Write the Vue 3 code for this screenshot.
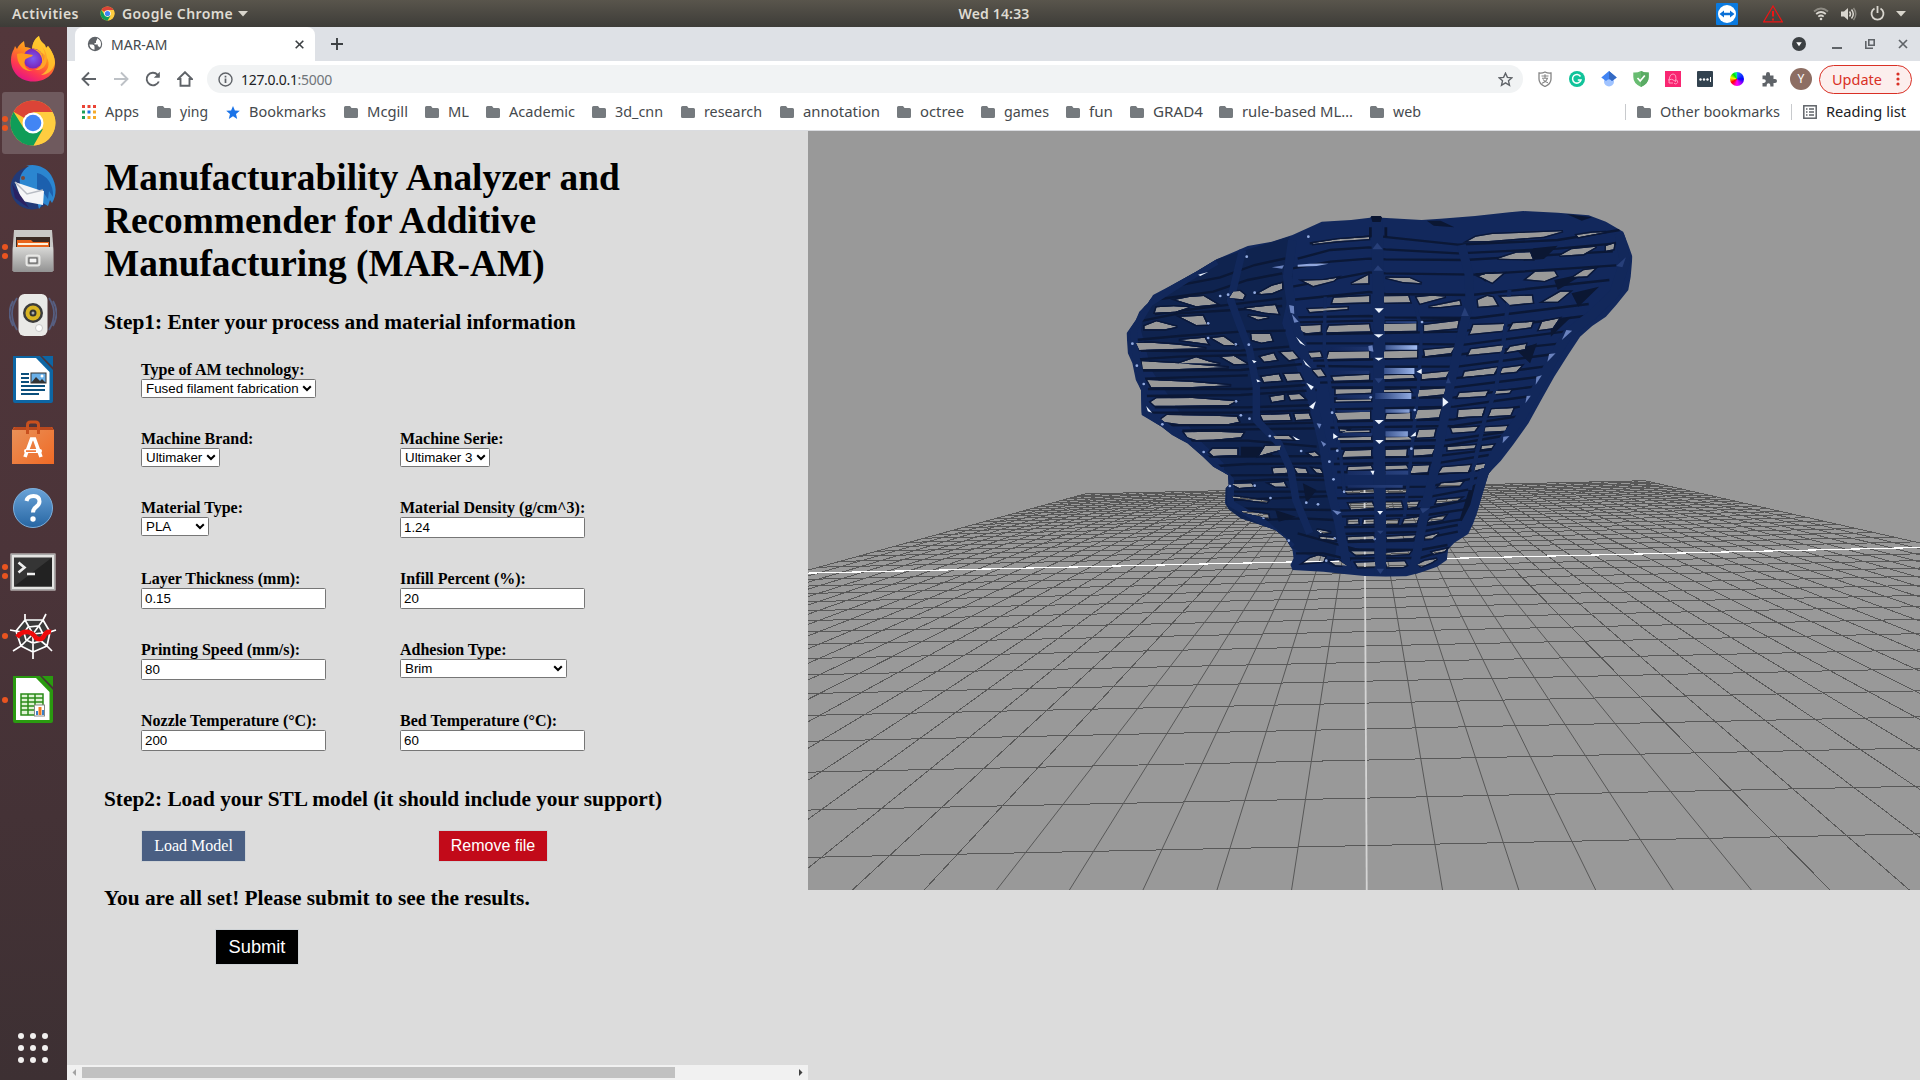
<script setup>
const bookmarks = [
  { t: 'Apps', k: 'apps', w: 75, s: 34 }, { t: 'ying', k: 'f', w: 69, s: 28 }, { t: 'Bookmarks', k: 'star', w: 118, s: 77 },
  { t: 'Mcgill', k: 'f', w: 81, s: 41 }, { t: 'ML', k: 'f', w: 61, s: 21 }, { t: 'Academic', k: 'f', w: 106, s: 66 },
  { t: '3d_cnn', k: 'f', w: 89, s: 48 }, { t: 'research', k: 'f', w: 99, s: 58 }, { t: 'annotation', k: 'f', w: 117, s: 77 },
  { t: 'octree', k: 'f', w: 84, s: 44 }, { t: 'games', k: 'f', w: 85, s: 45 }, { t: 'fun', k: 'f', w: 64, s: 24 },
  { t: 'GRAD4', k: 'f', w: 89, s: 50 }, { t: 'rule-based ML…', k: 'f', w: 151, s: 111 }, { t: 'web', k: 'f', w: 60, s: 28 }
]
const rows = [
  [{ l: 'Type of AM technology:', v: 'Fused filament fabrication', sel: true, w: 175 }],
  [{ l: 'Machine Brand:', v: 'Ultimaker', sel: true, w: 79 }, { l: 'Machine Serie:', v: 'Ultimaker 3', sel: true, w: 90 }],
  [{ l: 'Material Type:', v: 'PLA', sel: true, w: 68 }, { l: 'Material Density (g/cm^3):', v: '1.24', w: 185 }],
  [{ l: 'Layer Thickness (mm):', v: '0.15', w: 185 }, { l: 'Infill Percent (%):', v: '20', w: 185 }],
  [{ l: 'Printing Speed (mm/s):', v: '80', w: 185 }, { l: 'Adhesion Type:', v: 'Brim', sel: true, w: 167 }],
  [{ l: 'Nozzle Temperature (°C):', v: '200', w: 185 }, { l: 'Bed Temperature (°C):', v: '60', w: 185 }]
]
const dock = [
  { k: 'firefox', d: 0 }, { k: 'chrome', d: 2, on: true }, { k: 'bird', d: 0 }, { k: 'files', d: 2 }, { k: 'music', d: 0 },
  { k: 'writer', d: 0 }, { k: 'soft', d: 0 }, { k: 'help', d: 0 }, { k: 'term', d: 2 }, { k: 'spyder', d: 1 }, { k: 'calc', d: 1 }
]

// Perspective projection of the 50 x 50 build-plate grid into the viewport (origin 808,130)
const project = (u, n) => {
  const w = 1 - 0.00015 * u - 0.04161 * n
  return [(1364.9 + 22.64 * u - 56.76 * n) / w - 808, (560.3 - 0.61 * u - 17.356 * n) / w - 130]
}
const seg = (a, b) => ({ x1: a[0].toFixed(1), y1: a[1].toFixed(1), x2: b[0].toFixed(1), y2: b[1].toFixed(1) })
const cross = []
const along = []
for (let n = -25; n <= 17; n++) if (n !== 0) cross.push(seg(project(-25, n), project(25, n)))
for (let u = -25; u <= 25; u++) if (u !== 0) along.push({ ...seg(project(u, -25), project(u, 18)), soft: Math.abs(u) <= 5 })
const axisA = seg(project(-25, 0), project(25, 0))
const axisB = seg(project(0, -25), project(0, 18))

const outline = '615,95 700,90 755,83 760,78 786,78 790,83 905,90 960,86 1060,78 1160,67 1200,63 1300,68 1390,76 1440,95 1490,125 1505,165 1517,200 1512,260 1505,300 1470,345 1440,380 1400,408 1365,440 1330,495 1290,560 1255,625 1215,700 1170,765 1135,812 1100,850 1085,900 1068,960 1055,1000 1040,1032 1000,1058 982,1078 978,1110 950,1130 900,1148 860,1159 800,1160 740,1158 680,1152 620,1145 530,1140 524,1125 533,1105 530,1080 510,1045 480,1020 430,1002 380,985 345,958 334,940 336,895 345,885 343,855 300,830 270,800 225,760 180,735 150,710 92,675 90,600 75,570 65,520 52,490 48,430 75,390 85,365 110,340 125,315 180,285 250,245 310,208 400,168 470,155 530,135'
const holes = `590,159 660,148 752,141 752,147 660,154 590,162
650,323 753,318 753,337 645,340|795,319 866,318 872,337 795,338|890,322 935,317 975,320 900,341|925,351 1015,332 1018,344 960,351|575,357 690,352 690,357 580,366
552,408 612,405 612,425 570,430 556,424|636,407 752,403 756,424 628,427|795,402 890,400 890,422 795,424|912,405 1012,392 1008,415 912,424
575,488 610,486 615,500 585,503|636,486 752,484 752,505 630,507|795,484 892,482 892,503 795,505|912,480 1000,472 990,489 915,499
588,540 612,538 625,558 605,560|645,560 752,554 752,569 650,572|795,556 880,554 885,564 795,568|905,552 985,544 975,562 905,568
655,598 760,597 758,608 655,612|655,629 758,628 758,633 655,635|795,600 870,598 875,606 795,607|897,600 975,595 970,613 893,621
652,668 755,665 755,688 662,690|803,672 872,669 872,687 800,688|893,660 962,657 955,682 885,687
662,743 758,740 758,750 662,750|672,723 754,721 754,726 676,728|800,742 868,741 878,749 800,751|897,720 945,718 940,740 890,743|668,718 690,719 680,725 668,724
682,783 758,780 758,799 675,801|800,780 862,778 860,799 800,799|882,778 942,776 935,793 882,797
692,831 758,828 762,838 690,841|800,828 860,826 866,836 800,839|880,828 927,826 922,847 872,850
680,902 765,898 768,908 690,911|800,899 862,898 860,908 800,909
692,940 760,936 768,953 700,959|800,936 845,935 850,953 800,956|862,936 897,934 890,950 865,954
690,989 720,988 722,1001 690,1003|737,989 766,988 766,1001 735,1002|802,990 838,988 835,1002 800,1003|855,988 897,981 890,1000 850,1002
690,1042 765,1038 770,1048 690,1050|802,1040 888,1036 880,1045 805,1048|700,1084 768,1084 768,1092 715,1096|800,1088 874,1083 868,1092 800,1096
712,1118 770,1116 772,1130 720,1132|800,1116 855,1114 862,1126 852,1131 805,1132|890,1125 915,1112 950,1106 935,1117 905,1130|935,1086 978,1076 972,1084 940,1092
580,1105 605,1096 625,1101 620,1115 560,1120|635,1112 665,1111 690,1128 655,1126|600,1018 642,1027 620,1031|610,1040 650,1043 654,1051 610,1046
354,918 460,932 455,938 358,925|380,961 460,973 462,986 385,968|352,882 410,880 418,890 375,894|462,880 505,876 512,890 480,890
75,459 120,458 200,464 280,475 180,477 85,480|92,514 200,520 345,532 200,537 95,537|108,570 230,575 352,586 240,591 120,592
135,625 240,624 365,634 345,645 200,647 130,647 118,636|165,675 300,677 368,680 375,695 345,702 200,702 158,696 148,688
215,727 300,725 388,728 380,742 300,749 250,750 225,742|298,776 370,776 370,795 300,798 288,787
135,352 185,349 230,352 190,365 130,368|190,329 230,321 272,318 312,343 250,349|100,408 135,394 195,410 160,418 100,418|203,380 270,377 282,404 250,405
345,325 358,304 378,303 392,315 386,328|430,310 470,287 500,279 500,297 470,310 440,312|390,355 480,345 490,372 450,368|400,376 462,382 430,389
410,432 465,432 472,452 440,458 412,450|295,444 330,440 365,465 330,465|200,450 275,443 285,462|322,500 360,498 398,521 360,523
200,520 250,502 290,515 320,522|436,500 475,490 485,510 448,515|495,487 530,484 547,505 520,511
440,560 490,553 498,572 447,576|505,552 550,550 560,570 515,573|465,620 505,614 505,630 470,636|518,614 550,612 567,628 525,630
437,675 520,672 525,690 445,692|535,672 577,670 584,688 540,690|473,738 520,738 532,749 480,748|450,768 497,766 494,780 432,798
472,835 512,832 516,848 475,851|535,833 568,836 574,850 545,850|575,790 595,786 608,798 590,800|588,834 610,837 618,850 600,848
1038,154 1062,140 1110,132 1315,124 1260,140 1100,153|1125,206 1180,188 1220,187 1228,208|1305,197 1340,178 1412,170 1375,193
1070,258 1090,252 1142,250 1110,278|1208,268 1235,245 1290,244 1298,258 1262,273|1345,261 1375,241 1408,236 1385,259|1355,135 1400,128 1440,126 1360,142
1068,330 1095,318 1112,322 1125,346 1070,350|1135,320 1225,317 1228,338 1160,345|1258,335 1308,305 1335,305 1300,335|1440,168 1465,160 1462,178 1440,182
1055,405 1145,402 1140,422 1045,432|1170,400 1228,395 1222,412 1160,420|1255,395 1305,385 1285,415 1245,420
1048,478 1142,466 1137,485 1040,495|1162,470 1208,462 1205,478 1150,487|1030,545 1125,532 1115,552 1025,561|1140,535 1195,527 1180,545 1133,550
1015,609 1097,603 1090,618 1008,623|1012,660 1087,655 1080,678 1010,682|1108,658 1172,654 1163,675 1100,679|1120,603 1165,600 1160,608 1118,612
990,715 1068,710 1058,724 995,728|1090,712 1154,708 1148,722 1087,725|980,771 1062,765 1058,775 980,781|1080,768 1115,764 1108,774 1078,778
966,832 1047,825 1040,846 955,849|1062,825 1090,821 1086,834 1057,843|962,880 1025,875 1015,888 953,891
950,930 1020,923 1010,932 946,941|930,986 975,976 965,990 922,996|915,1040 955,1030 935,1046 915,1048
560,272 620,270 660,263 650,272 590,288|700,281 750,255 750,280|800,263 870,264 905,280 850,276`
  .split(/[|\n]/).map(s => s.trim())
const shape = [outline, ...holes].map(p => 'M' + p + 'Z').join(' ')
const holePath = holes.map(p => 'M' + p + 'Z').join(' ')

// Shadowed gaps under each horizontal strut
const gaps = `580,160 752,139 790,140 1010,164 1300,150 1480,120
545,206 640,180 752,172 800,178 1010,190 1300,176 1470,160
530,235 640,215 752,206 800,208 1030,210 1460,184|530,290 752,247 800,250 1060,254 1470,226
525,330 752,306 800,312 1050,315 1450,270|540,382 752,378 800,382 1060,384 1390,342|545,397 752,392 800,394 1020,390
560,433 752,430 1010,425 1380,378|570,460 752,460 1030,464 1340,422|590,512 752,509 1000,495 1310,460
600,528 752,530 1010,530 1290,492|610,578 752,574 1000,565 1260,530|640,592 752,592 1000,592 1250,560
650,625 1000,622 1230,590|640,658 752,656 1000,650 1210,620|650,695 1000,688 1190,650|640,713 1000,708 1180,680
660,756 980,750 1160,724|640,777 970,768 1140,738|660,806 960,797 1110,778|650,822 960,818 1100,795|660,846 950,852 1085,838
660,893 920,890 1075,862|650,925 930,920 1060,895|660,962 920,955 1060,925|650,980 920,975 1050,955|660,1012 900,1008 1040,985
670,1032 900,1026 1010,1005|690,1056 880,1052 1010,1025|690,1078 900,1080 980,1065|690,1105 900,1104 960,1085
180,290 320,262 420,225 510,205|125,330 300,305 400,270 500,250|130,372 300,350 500,325|80,395 200,370 360,360 500,348
75,450 200,438 380,425 510,422|90,482 200,483 380,482 520,470|80,508 200,500 400,495|95,542 380,540 560,522
100,566 400,556|110,597 400,597 570,585|95,618 380,615 600,600|130,652 400,652 600,645|110,668 370,668 600,660|165,706 390,704 600,698
210,722 400,718 600,715|235,752 400,752 600,770|280,800 380,800 620,798|310,828 400,822 630,820|350,856 500,855 640,858
350,875 480,868 640,870|340,905 460,905 640,905|345,930 480,925 640,918|380,955 480,958 650,960|430,990 560,985 650,990
545,1030 650,1060 720,1080|540,1090 620,1090 700,1110`.split(/[|\n]/).map(s => s.trim())

const ribs = [
  { p: '775,85 778,250 782,450 780,650 782,850 785,1000 785,1155', w: 34 },
  { p: '1020,165 1042,250 1045,330 1010,480 985,600 965,720 945,830 920,930 900,1040 880,1150', w: 26 },
  { p: '530,150 515,260 530,370 565,490 590,640 620,770 640,900 665,1000 690,1140', w: 26 },
  { p: '385,180 350,330 375,400 405,480 425,590 425,690 490,760 525,840 540,930 580,1030', w: 22 },
  { p: '1480,130 1495,215 1465,310 1400,375 1330,430 1290,500 1245,585 1195,680 1145,750 1085,850 1060,950 1025,1020', w: 30 },
  { p: '310,215 220,270 115,340 68,420 75,500 95,580 100,665 200,735 290,815 350,870 350,940 450,1000 530,1070', w: 20 },
  { p: '1160,300 1140,480 1120,600 1090,680 1065,790 1045,900', w: 12 },
  { p: '625,320 622,480 640,600 655,700 670,800 680,900', w: 10 },
  { p: '880,320 905,420 895,600 880,740 868,860 855,980', w: 10 }
]
const bright = '768,355 795,355 781,369|766,433 794,433 780,443|768,503 794,503 780,512|768,690 795,690 781,703|770,750 795,750 782,762|776,963 793,963 784,974|966,622 983,637 966,650|890,545 905,536 905,552|872,740 888,725 888,738|570,578 592,590 584,600|578,650 598,634 590,658|540,440 568,468 552,460|560,508 584,535 568,524|648,730 662,740 648,747|600,1020 632,1025 612,1030|105,648 122,668 110,664|530,738 552,750 540,750|412,510 426,514 418,520|425,568 438,574 428,577|256,254 285,246 262,258|756,842 768,842 764,856'
const mid = '1270,515 1275,492 1294,490|1236,584 1238,560 1254,556|1206,640 1210,618 1222,617|1312,450 1325,420 1342,422|520,345 534,348 535,372 524,368|528,372 548,395 535,398|645,960 672,966 660,975|1140,760 1142,740 1160,738|600,700 614,702 608,716|612,752 628,762 620,770|470,232 505,226 500,236|750,468 762,466 765,485 752,482'
const faint = '762,178 776,158 792,178|765,242 778,226 793,242|1020,378 1030,352 1042,378|768,565 794,565 780,580|900,955 928,955 908,970|975,580 982,562 990,580|775,1022 795,1022 785,1032|774,1136 796,1136 785,1152|1470,228 1498,202 1488,232'
const specks = [[397, 200], [320, 318], [343, 314], [420, 308], [285, 400], [285, 444], [365, 463], [403, 464], [65, 461], [78, 527], [98, 582], [152, 703], [366, 634], [405, 686], [380, 676], [464, 738], [272, 786], [348, 888], [420, 887], [466, 924], [446, 983], [519, 1052], [604, 943], [645, 668], [885, 660], [637, 815], [649, 868], [628, 1112], [906, 396], [652, 1045], [768, 1047], [555, 783], [570, 938], [757, 622], [660, 782], [875, 776], [576, 140], [680, 905]]
</script>

<template>
  <div class="desktop">
    <header class="top">
      <span class="act">Activities</span>
      <svg class="tchrome" width="15" height="15" viewBox="0 0 48 48"><use href="#chrome-logo" /></svg>
      <span class="appname">Google Chrome</span>
      <svg width="10" height="6" viewBox="0 0 10 6"><path d="M0 0h10L5 5.500z" fill="#d8d5cc" /></svg>
      <span class="clock">Wed 14:33</span>
      <div class="tray">
        <svg width="22" height="22" viewBox="0 0 22 22"><rect width="22" height="22" rx="1" fill="#0a7ae0" /><circle cx="11" cy="11" r="9" fill="#fff" /><path d="M3.500 11l4.500-3.500v2.300h6V7.500l4.500 3.500-4.500 3.500v-2.300H8v2.300z" fill="#0a6fd6" /></svg>
        <svg width="20" height="18" viewBox="0 0 20 18"><path d="M10 1L19.300 16.800H.7z" fill="none" stroke="#f01414" stroke-width="1.200" /><path d="M10 6v5.500M10 13.500v2" stroke="#f01414" stroke-width="2" /></svg>
        <svg width="16" height="14" viewBox="0 0 16 14" fill="none" stroke="#d9d6cf" stroke-width="1.800"><path d="M1 4.500Q8-1.500 15 4.500" opacity=".45" /><path d="M3.200 7Q8 3 12.800 7M5.300 9.600Q8 7.400 10.700 9.600" /><circle cx="8" cy="12" r="1.300" fill="#d9d6cf" stroke="none" /></svg>
        <svg width="16" height="14" viewBox="0 0 16 14"><path d="M0 4.500h3L7 1v12L3 9.500H0z" fill="#d9d6cf" /><path d="M8.500 4.500q2 2.500 0 5M10.500 2.500q3.600 4.500 0 9" fill="none" stroke="#d9d6cf" stroke-width="1.500" /><path d="M12.500 1q4.500 6 0 12" fill="none" stroke="#d9d6cf" stroke-width="1.500" opacity=".45" /></svg>
        <svg width="15" height="15" viewBox="0 0 15 15" fill="none" stroke="#d9d6cf" stroke-width="1.800"><path d="M4.500 2.500a6 6 0 1 0 6 0M7.500 0v7" /></svg>
        <svg width="10" height="6" viewBox="0 0 10 6"><path d="M0 0h10L5 5.500z" fill="#d8d5cc" /></svg>
      </div>
    </header>

    <div class="body">
      <nav class="dock">
        <div v-for="i in dock" :key="i.k" class="slot">
          <div class="tile" :class="{ on: i.on }">
            <span class="dots"><i v-for="d in i.d" :key="d"></i></span>
            <svg width="48" height="48" viewBox="0 0 48 48">
              <defs v-if="i.k === 'firefox'">
                <linearGradient id="ffg" x1=".8" y1="0" x2=".3" y2="1"><stop offset="0" stop-color="#ffe536" /><stop offset=".45" stop-color="#ff8a1c" /><stop offset=".75" stop-color="#ff3a4f" /><stop offset="1" stop-color="#e3128a" /></linearGradient>
                <radialGradient id="ffp"><stop offset="0" stop-color="#7c5cf5" /><stop offset="1" stop-color="#7a25b8" /></radialGradient>
                <linearGradient id="orange" x1="0" y1="0" x2="1" y2="1"><stop offset="0" stop-color="#e8925a" /><stop offset="1" stop-color="#f06a25" /></linearGradient>
                <linearGradient id="blu" x1="0" y1="0" x2="0" y2="1"><stop offset="0" stop-color="#6aa3d8" /><stop offset="1" stop-color="#2766a3" /></linearGradient>
                <linearGradient id="met" x1="0" y1="0" x2="0" y2="1"><stop offset="0" stop-color="#d8d8d6" /><stop offset="1" stop-color="#929292" /></linearGradient>
                <g id="chrome-logo">
                  <circle cx="24" cy="24" r="22.500" fill="#fcc934" />
                  <path d="M24 24L4.500 12.800A22.500 22.500 0 0 1 43.500 13z" fill="#db4437" /><path d="M24 13h19.500a22.500 22.500 0 0 1-19 33.500L34 30z" fill="#ffcd40" />
                  <path d="M4.500 12.800A22.500 22.500 0 0 0 24.500 46.500L34 30 24 34 14 28z" fill="#0f9d58" /><circle cx="24" cy="24" r="10.500" fill="#fff" /><circle cx="24" cy="24" r="8.300" fill="#4285f4" />
                </g>
              </defs>
              <template v-if="i.k === 'firefox'">
                <path d="M24 46.500C11 46.500 2 37 2 25c0-4 1-8 3-11l1-3 2 3c1-3 4-6 7-8l1 6c3 0 6 1 7 3 0-5 2-11 7-14 1 5 3 6 6 9l1 3 2-2c3 4 7 10 7 17 0 11-9 18.500-22 18.500z" fill="url(#ffg)" />
                <path d="M23 15c0-5 2-11 7-14 1 5 3 6 6 9l1 3 2-2c3 4 7 10 7 17-2 8-8 12-14 12 8-4 9-12 6-17-3-5-8-8-15-8z" fill="#ffc92e" opacity=".8" />
                <circle cx="24" cy="23.500" r="10" fill="url(#ffp)" /><path d="M8 19c4-2 10 0 16 1-2 3-6 2-8 5-2 6 2 10 8 11-10 1-16-7-16-17z" fill="#ff9a1c" /><path d="M24 14c6 0 11 4 10 12 3-5 2-10-1-14 5 4 7 14 2 20-4 4-9 3-9 3 6-2 9-8 6-14-2-4-5-6-8-7z" fill="#ffa62a" />
              </template>
              <use v-else-if="i.k === 'chrome'" href="#chrome-logo" />
              <template v-else-if="i.k === 'bird'">
                <circle cx="23" cy="25" r="21.500" fill="#223a78" />
                <path d="M17 3c9-3 20 1 25 9 6 10 6 20 1 28l-2-3-2 6-5-3-4 6-2-8-14-14C9 22 9 10 20 3z" fill="#2b86d0" /><path d="M28 10c10 2 17 12 16 24l-4-6-1 8-5-7-6 3z" fill="#1c60ae" />
                <path d="M6 19l24 8 5 1-1 14L13 38z" fill="#f4f5f7" /><path d="M6 19l12 12 16-4" fill="none" stroke="#b8bcc4" stroke-width="1.500" /><path d="M3 21l3 14 8 6 6 4-6-9z" fill="#2a2263" /><circle cx="14" cy="15" r="2" fill="#7a4a3a" />
              </template>
              <template v-else-if="i.k === 'files'">
                <path d="M5 3h38l1.500 20V44h-41V23z" fill="#c8c8c6" /><rect x="7" y="10" width="34" height="12" fill="#3a2a24" /><path d="M8 13h14l2 2h16v8H8z" fill="#e8641c" /><rect x="9" y="16" width="30" height="2" fill="#fff0d8" /><rect x="4" y="20" width="40" height="25" rx="1" fill="url(#met)" /><rect x="17.500" y="28.500" width="13" height="10" rx="2" fill="none" stroke="#e8e8e6" stroke-width="2" /><rect x="20" y="31" width="8" height="5" fill="#f4f4f4" stroke="#555" />
              </template>
              <g v-else-if="i.k === 'music'" transform="translate(0 1)">
                <path d="M8 6q-10 15 0 32M4 9q-7 12 0 25M40 6q10 15 0 32M44 9q7 12 0 25" fill="none" stroke="#565e80" stroke-width="1.800" /><rect x="9.500" y="2" width="29" height="42" rx="6" fill="#e9e9e7" /><circle cx="24" cy="21" r="10" fill="#3c3c3c" /><circle cx="24" cy="21" r="7.500" fill="#d9b422" /><circle cx="24" cy="21" r="3.500" fill="#333" /><circle cx="24" cy="21" r="1.500" fill="#aaa" /><circle cx="30" cy="36" r="3.500" fill="#fff" stroke="#c8c8c8" />
              </g>
              <g v-else-if="i.k === 'writer' || i.k === 'calc'" transform="translate(0 -1)">
                <path :fill="i.k === 'writer' ? '#0d66a4' : '#2a9a10'" d="M6 0h24l14 15v31q0 2-2 2H6q-2 0-2-2V2q0-2 2-2zM32 0h12v12z" />
                <path d="M7 3h20l13.500 14v28H7z" fill="#fff" />
                <template v-if="i.k === 'writer'"><path d="M12 19h8M12 23h8M12 27h8M12 31h24M12 35h24M12 39h18" stroke="#0b4f7c" stroke-width="2" /><rect x="22" y="18" width="15" height="10" fill="#6ab0e8" stroke="#333" /><path d="M22 28l5-6 4 4 2-2 4 4z" fill="#333" /><circle cx="33" cy="21" r="1.500" fill="#fff" /></template>
                <template v-else><rect x="12" y="19" width="22" height="21" fill="#dff3d4" /><path d="M12 19h22v21H12zM12 23h22M12 27h22M12 31h22M12 35h22M19 19v21M26 19v21" fill="none" stroke="#2a8a18" stroke-width="1.500" /><rect x="25.500" y="30" width="10" height="11" fill="#fff" stroke="#888" /><path d="M27 36h2v4h-2zM33 35h2v5h-2z" fill="#3b80c8" /><path d="M29.500 32h3v8h-3z" fill="#f07a20" /></template>
              </g>
              <template v-else-if="i.k === 'soft'">
                <path d="M4 7h40v6H4z" fill="#a8401c" /><path d="M3 10l3-3h36l3 3v34H3z" fill="url(#orange)" /><path d="M3 10l3-3h36l3 3z" fill="#b8481e" /><path d="M18.500 14V5q0-3 3-3h5q3 0 3 3v9" fill="none" stroke="#c8501e" stroke-width="3" /><path d="M16 37l6.500-18h3L32 37M19 31h12" fill="none" stroke="#fff" stroke-width="3.600" /><rect x="15" y="29" width="18" height="4" rx="2" fill="#fff" /><rect x="17" y="30.300" width="10" height="1.600" fill="#ef6d2b" />
              </template>
              <template v-else-if="i.k === 'help'">
                <circle cx="24" cy="24" r="19.500" fill="url(#blu)" stroke="#7db0dd" /><path d="M17.500 17q1-5 7-5 6 0 6 5.500 0 3-3.500 5.500-3 2-3 5.500" fill="none" stroke="#fff" stroke-width="4" /><circle cx="24" cy="35" r="2.700" fill="#fff" />
              </template>
              <g v-else-if="i.k === 'term'" transform="translate(0 .5)">
                <rect x="1.500" y="5" width="45" height="37" fill="#e4e4e2" /><rect x="2.500" y="6" width="43" height="35" fill="none" stroke="#aaa" /><rect x="5" y="9" width="38" height="29" fill="#353535" /><path d="M5 38L43 9v29z" fill="#222" /><path d="M9.500 14l6 5-6 5M18 25.500h8" fill="none" stroke="#eee" stroke-width="2.600" />
              </g>
              <template v-else>
                <path d="M15 7h19l7 13-3 15-14 5-12-6-5-14z" fill="#3b3b3b" /><path d="M16 2v6h18l3-6M16 8L7 19l-6-1M7 19l5 15-8 5M12 34l12 6v7M24 40l14-6 5 5M38 34l3-14 6-2M41 20l-7-12M16 8l8 14 10-14M24 22L7 19M24 22l-12 12M24 22v18M24 22l14 12M24 22l17-2M19 15l11-1 4 8-2 7-8 2-7-3-2-7z" fill="none" stroke="#fff" stroke-width="1.700" /><path d="M8 25q5-6 11-5 5 1 8 6 5 3 8-2 2-5 7-4" fill="none" stroke="#ee0a0a" stroke-width="4.600" />
              </template>
            </svg>
          </div>
        </div>
        <svg class="grid9" width="32" height="32" viewBox="0 0 32 32" fill="#f2f0ef"><template v-for="a in 3" :key="a"><circle v-for="b in 3" :key="b" :cx="a * 12 - 8" :cy="b * 12 - 8" r="3" /></template></svg>
      </nav>

      <main class="win">
        <div class="tabs">
          <div class="tab">
            <svg width="16" height="16" viewBox="0 0 16 16"><circle cx="8" cy="8" r="7.200" fill="#5f6368" /><path d="M2.300 8.500h3.200q2 .3 2 2v3.200Q3.300 13.200 2.300 8.500zM10 2.300q4 1.500 4 5.700 0 2-1.200 3.500-.6-1.200-2-1.200V8.500H7.500V7H9V5q1.200 0 1-2.700z" fill="#fff" /></svg>
            <span>MAR-AM</span>
            <svg class="x" width="9" height="9" viewBox="0 0 9 9"><path d="M.7.7l7.600 7.600M8.300.7L.7 8.300" stroke="#3c4043" stroke-width="1.600" /></svg>
          </div>
          <svg class="plus" width="12" height="12" viewBox="0 0 12 12"><path d="M6 0v12M0 6h12" stroke="#3c4043" stroke-width="1.900" /></svg>
          <div class="ctl">
            <svg width="14" height="14" viewBox="0 0 14 14"><circle cx="7" cy="7" r="7" fill="#3c4043" /><path d="M4.200 5.300h5.600L7 9.300z" fill="#fff" /></svg>
            <svg width="10" height="14" viewBox="0 0 10 14"><path d="M0 11h10" stroke="#5f6368" stroke-width="2" /></svg>
            <svg width="10" height="10" viewBox="0 0 10 10" fill="none" stroke="#5f6368" stroke-width="1.600"><path d="M3.800.8h5.400v5.400H3.800zM.8 2v7.200H8" /></svg>
            <svg width="10" height="10" viewBox="0 0 10 10"><path d="M1 1l8 8M9 1L1 9" stroke="#5f6368" stroke-width="1.700" /></svg>
          </div>
        </div>

        <div class="bar">
          <svg class="nav" viewBox="0 0 16 16"><path d="M15 8H2M8 1.500L1.500 8 8 14.500" /></svg>
          <svg class="nav off" viewBox="0 0 16 16"><path d="M1 8h13M8 1.500L14.500 8 8 14.500" /></svg>
          <svg class="nav" viewBox="0 0 16 16"><path d="M13.800 10.500A6.300 6.300 0 1 1 12.500 3.600L14 5.200" /><path d="M14.800.8v6H8.800z" fill="#5f6368" stroke="none" /></svg>
          <svg class="nav" viewBox="0 0 16 16"><path d="M8 1.200L1 8h2.500v6.800h9V8H15z" /></svg>
          <div class="omni">
            <svg width="15" height="15" viewBox="0 0 15 15" fill="none" stroke="#5f6368"><circle cx="7.500" cy="7.500" r="6.500" stroke-width="1.400" /><path d="M7.500 6.500v4.500M7.500 3.700v1.700" stroke-width="1.700" /></svg>
            <span class="url">127.0.0.1<em>:5000</em></span>
            <svg class="fav" width="15" height="15" viewBox="0 0 15 15"><path d="M7.500 1.200l1.900 4.200 4.500.4-3.400 3 1 4.500-4-2.400-4 2.400 1-4.500-3.400-3 4.500-.4z" fill="none" stroke="#5f6368" stroke-width="1.400" /></svg>
          </div>
          <div class="ext">
            <svg viewBox="0 0 16 16"><path d="M8 1q3 1.500 6 1v6q0 5-6 7.500Q2 13 2 8V2q3 .5 6-1z" fill="none" stroke="#858585" stroke-width="1.300" /><path d="M4.500 5h7M8 3.200v4M5 7.200h5.500q-1 3.500-5.500 5M6 8.500q2 2.500 5 3.300" fill="none" stroke="#858585" stroke-width="1.100" /></svg>
            <svg viewBox="0 0 16 16"><circle cx="8" cy="8" r="8" fill="#11c39a" /><path d="M11.500 5.500A4.300 4.300 0 1 0 12 9H8.800" fill="none" stroke="#fff" stroke-width="1.500" /></svg>
            <svg viewBox="0 0 16 16"><circle cx="8" cy="10.500" r="5" fill="#a0c3ff" /><path d="M8 0L.3 6.500 5 10q3-3.500 6 0l4.700-3.500z" fill="#4285f4" /><path d="M8 0l7.700 6.500L11 10Q9.500 8 8 8z" fill="#356ac3" /></svg>
            <svg viewBox="0 0 16 16"><path d="M8 0q4 2 7.700 1.500V6q0 6.500-7.700 10Q.3 12.500.3 6V1.500Q4 2 8 0z" fill="#68bc71" /><path d="M8 0q4 2 7.700 1.500V6q0 6.500-7.700 10z" fill="#5aab64" /><path d="M4.500 7l2.700 3 4.600-5.500" fill="none" stroke="#fff" stroke-width="1.700" /></svg>
            <svg viewBox="0 0 16 16"><rect width="16" height="16" fill="#f92672" /><path d="M4 12q0-9 4-9t2.500 8M3 9q4-2 7 1M10 9a2 2 0 1 1-1 3M4 12h4" fill="none" stroke="#ff9cc0" /></svg>
            <svg viewBox="0 0 16 16"><rect width="16" height="16" rx="1" fill="#32424f" /><circle cx="3.500" cy="8.500" r="1.200" fill="#fff" /><circle cx="7" cy="8.500" r="1.200" fill="#fff" /><circle cx="10.500" cy="8.500" r="1.200" fill="#fff" /><path d="M13.500 6v5" stroke="#fff" /></svg>
            <span class="wheel"></span>
            <svg viewBox="0 0 16 16"><path d="M1.500 4.500H5V3a2 2 0 0 1 4 0v1.500h3.500V8H14a2 2 0 0 1 0 4h-1.500v3.500H9.300V14a1.800 1.800 0 0 0-3.600 0v1.500H1.500v-3.600H3a1.800 1.800 0 0 0 0-3.600H1.500z" fill="#5f6368" /></svg>
            <span class="me">Y</span>
          </div>
          <div class="upd"><span>Update</span><svg width="4" height="14" viewBox="0 0 4 14" fill="#d93025"><circle cx="2" cy="2" r="1.600" /><circle cx="2" cy="7" r="1.600" /><circle cx="2" cy="12" r="1.600" /></svg></div>
        </div>

        <div class="marks">
          <div v-for="b in bookmarks" :key="b.t" class="mk" :style="{ width: b.w + 'px' }">
            <svg v-if="b.k === 'f'" width="14" height="12" viewBox="0 0 14 12"><path d="M1.500 0H6l1.500 2h5Q14 2 14 3.500v7q0 1.500-1.500 1.500h-11Q0 12 0 10.500v-9Q0 0 1.500 0z" fill="#757a7e" /></svg>
            <svg v-else-if="b.k === 'star'" width="14" height="13" viewBox="0 0 14 13"><path d="M7 0l1.900 4.400 4.900.4L10 8l1.200 4.900L7 10.300l-4.200 2.600L4 8 .2 4.800l4.900-.4z" fill="#1a73e8" /></svg>
            <svg v-else width="14" height="14" viewBox="0 0 14 14"><path d="M0 0h3v3H0zM5.500 0h3v3h-3zM11 0h3v3h-3z" fill="#ea4335" /><path d="M0 5.500h3v3H0zM0 11h3v3H0z" fill="#1ea05a" /><path d="M5.500 5.500h3v3h-3z" fill="#1a73e8" /><path d="M11 5.500h3v3h-3zM5.500 11h3v3h-3zM11 11h3v3h-3z" fill="#f5ab2a" /></svg>
            <svg class="lab" :width="b.s" height="20"><text x="0" y="15" :textLength="b.s" lengthAdjust="spacingAndGlyphs">{{ b.t }}</text></svg>
          </div>
          <div class="mk right sep">
            <svg width="14" height="12" viewBox="0 0 14 12"><path d="M1.500 0H6l1.500 2h5Q14 2 14 3.500v7q0 1.500-1.500 1.500h-11Q0 12 0 10.500v-9Q0 0 1.500 0z" fill="#757a7e" /></svg>
            <svg class="lab" width="121" height="20"><text x="0" y="15" textLength="120" lengthAdjust="spacingAndGlyphs">Other bookmarks</text></svg>
          </div>
          <div class="mk sep rl">
            <svg width="14" height="14" viewBox="0 0 14 14" fill="none" stroke="#5f6368"><rect x=".8" y=".8" width="12.400" height="12.400" stroke-width="1.500" /><path d="M3 4h1.500M3 7h1.500M3 10h1.500M6 4h5M6 7h5M6 10h5" stroke-width="1.500" /></svg>
            <svg class="lab dk" width="81" height="20"><text x="0" y="15" textLength="80" lengthAdjust="spacingAndGlyphs">Reading list</text></svg>
          </div>
        </div>

        <div class="page">
          <section class="left">
            <div class="form">
              <h1>Manufacturability Analyzer and<br>Recommender for Additive<br>Manufacturing (MAR-AM)</h1>
              <h3 class="s1">Step1: Enter your process and material information</h3>
              <div class="rows">
                <div v-for="(r, ri) in rows" :key="ri" class="row">
                  <div v-for="f in r" :key="f.l" class="fld">
                    <label>{{ f.l }}</label>
                    <div v-if="f.sel" class="sel" :style="{ width: f.w + 'px' }">{{ f.v }}<svg width="10" height="7" viewBox="0 0 10 7"><path d="M1.200 1.200L5 5l3.800-3.800" fill="none" stroke="#000" stroke-width="2" /></svg></div>
                    <div v-else class="inp" :style="{ width: f.w + 'px' }">{{ f.v }}</div>
                  </div>
                </div>
              </div>
              <h3 class="s2">Step2: Load your STL model (it should include your support)</h3>
              <div class="btns"><button class="load">Load Model</button><button class="rem">Remove file</button></div>
              <h3 class="s3">You are all set! Please submit to see the results.</h3>
              <button class="sub">Submit</button>
            </div>
            <div class="scroll">
              <svg width="15" height="15" viewBox="0 0 15 15"><path d="M9 4v7L5.500 7.500z" fill="#a3a3a3" /></svg>
              <div class="thumb"></div>
              <svg class="ra" width="15" height="15" viewBox="0 0 15 15"><path d="M6 4v7l3.500-3.500z" fill="#404040" /></svg>
            </div>
          </section>
          <svg class="view" width="1112" height="759" viewBox="0 1 1112 759">
            <rect width="1112" height="760" fill="#999" />
            <g stroke="#585858" stroke-width="1">
              <line v-for="(l, i) in cross" :key="'c' + i" v-bind="l" shape-rendering="crispEdges" />
              <line v-for="(l, i) in along" :key="'a' + i" :x1="l.x1" :y1="l.y1" :x2="l.x2" :y2="l.y2" :shape-rendering="l.soft ? 'auto' : 'crispEdges'" />
            </g>
            <line v-bind="axisB" stroke="#d4d4d4" stroke-width="1.800" />
            <line v-bind="axisA" stroke="#fff" stroke-width="1.200" shape-rendering="crispEdges" />
            <defs>
              <clipPath id="solid"><path :d="shape" clip-rule="evenodd" /></clipPath>
              <linearGradient id="shine"><stop offset="0" stop-color="#1d3672" /><stop offset="1" stop-color="#a3bdf2" /></linearGradient>
              <linearGradient id="dim"><stop offset="0" stop-color="#122659" /><stop offset="1" stop-color="#2c4684" /></linearGradient>
            </defs>
            <g transform="translate(302 60) scale(.34438 .33333)">
              <g clip-path="url(#solid)">
                <rect x="40" y="50" width="1490" height="1120" fill="#12285c" />
                <path d="M100 340l200-130 220-70 10 120-30 140 60 190 60 200 40 260-10 80-130-60-180-90-10-160-80-80-130-200-30-120z" fill="#0f234f" />
                <polyline v-for="(g, i) in gaps" :key="i" :points="g" fill="none" stroke="#0b1836" stroke-width="7" />
                <path d="M1230 175l70-8-40 40-60 5zM1060 250l60-5-30 30zM1290 270l90-20-80 50zM1340 310l80-20-60 60zM1280 395l60-15-60 60zM1180 480l60-20-20 60zM1110 800l30-20-60 110zM1045 890l40-20-50 130-20-10zM380 770l60 0 40 30-100 0zM560 880l40 20-30 40zM480 960l60 20-50 15zM1325 72l75 10-30 10zM920 92l40 0 40 20-60-5z" fill="#0b1733" />
                <path :d="holePath" fill="none" stroke="#0b1838" stroke-width="8" />
                <polyline v-for="(r, i) in ribs" :key="i" :points="r.p" fill="none" stroke="#12285b" :stroke-width="r.w" stroke-linejoin="round" />
                <path d="M757 78h34l-5 18h-24zM752 112l8 0v28h-8zM797 112l8 0v28h-8z" fill="#0a1530" />
                <path d="M800 466h92v13h-92zM796 534h88v18h-88zM770 609h105v18H770zM800 658h70v10h-70zM800 724h65v16h-65z" fill="url(#shine)" />
                <path d="M640 470h112v12H640zM645 542h108v10H645zM660 614h95v12H660zM660 660h95v6H660zM670 729h90v10H670zM690 843h72v12H690zM800 842h66v12H800zM800 394h90v6H800zM690 885h160v8H690z" fill="url(#dim)" />
                <path d="M545 224q50-5 90-3l-35 7-55 2z" fill="#90a6dc" />
                <polygon v-for="(m, i) in faint.split('|')" :key="'f' + i" :points="m" fill="#273f79" />
                <polygon v-for="(m, i) in mid.split('|')" :key="'m' + i" :points="m" fill="#6a82be" />
                <circle v-for="(s, i) in specks" :key="'s' + i" :cx="s[0]" :cy="s[1]" r="4" fill="#93abe0" />
                <polygon v-for="(m, i) in bright.split('|')" :key="'b' + i" :points="m" fill="#eef5ff" />
              </g>
            </g>
          </svg>
        </div>
      </main>
    </div>
  </div>
</template>

<style>
body { margin: 0; overflow: hidden; }
</style>
<style scoped>
.desktop { width: 1920px; height: 1080px; display: flex; flex-direction: column; font-family: "Noto Sans", sans-serif; overflow: hidden; }
.desktop * { box-sizing: border-box; }
.desktop svg { display: block; flex: none; }
.top { height: 27px; flex: none; display: flex; align-items: center; background: linear-gradient(#59554c, #3d3c38); color: #dfdbd2; font-weight: 600; font-size: 14px; position: relative; padding-left: 12px; }
.act { width: 88px; letter-spacing: .45px; }
.appname { margin-left: 7px; width: 116px; white-space: nowrap; letter-spacing: .4px; }
.clock { position: absolute; left: 0; width: 1988px; text-align: center; letter-spacing: .15px; }
.tray { margin-left: auto; display: flex; align-items: center; padding-right: 14px; }
.tray svg:nth-child(2) { margin-left: 25px; }
.tray svg:nth-child(3) { margin-left: 30px; }
.tray svg:nth-child(4) { margin-left: 12px; }
.tray svg:nth-child(5) { margin-left: 13px; }
.tray svg:nth-child(6) { margin-left: 11px; }
.body { flex: 1; display: flex; min-height: 0; }
.dock { width: 67px; flex: none; background: linear-gradient(#53373b, #4b3439 50%, #3d3033); display: flex; flex-direction: column; }
.slot { height: 64.100px; display: flex; align-items: center; padding-left: 2px; flex: none; }
.tile { width: 62px; height: 62px; border-radius: 3px; display: flex; align-items: center; position: relative; padding-left: 7px; }
.tile.on { background: #6f5a5e; }
.dots { position: absolute; left: 0; top: 0; height: 62px; display: flex; flex-direction: column; justify-content: center; gap: 3px; }
.dots i { width: 6px; height: 6px; border-radius: 50%; background: #e95420; }
.grid9 { margin: auto 0 16px 17px; }
.win { width: 1853px; display: flex; flex-direction: column; background: #fff; }
.tabs { height: 34px; flex: none; background: #dee1e6; display: flex; align-items: center; padding-left: 8px; }
.tab { width: 240px; height: 34px; background: #fff; border-radius: 8px 8px 0 0; display: flex; align-items: center; padding: 0 11px 0 12px; font-size: 14px; color: #45494d; }
.tab span { margin-left: 8px; }
.tab .x { margin-left: auto; }
.plus { margin-left: 16px; }
.ctl { margin-left: auto; display: flex; align-items: center; padding-right: 12px; }
.ctl svg { margin-left: 23px; }
.ctl svg:nth-child(2) { margin-left: 26px; }
.bar { height: 36px; flex: none; display: flex; align-items: center; padding-left: 14px; }
.nav { width: 16px; height: 16px; margin-right: 16px; fill: none; stroke: #5f6368; stroke-width: 1.900; }
.nav.off { stroke: #bdc1c6; }
.omni { width: 1316px; height: 28px; margin-left: -2px; border-radius: 14px; background: #f1f3f4; display: flex; align-items: center; padding: 0 10px 0 11px; font-size: 14px; color: #202124; }
.url { margin-left: 8px; letter-spacing: -.3px; }
.url em { font-style: normal; color: #70757a; }
.fav { margin-left: auto; }
.ext { display: flex; align-items: center; margin-left: 14px; gap: 16px; }
.ext svg { width: 16px; height: 16px; }
.wheel { width: 14px; height: 14px; margin: 1px; border-radius: 50%; background: conic-gradient(#2b7bff, #00f 25%, #a000ff 38%, #f0f 50%, #f00 66%, #ff0 78%, #0d0 90%, #0fa); }
.me { width: 22px; height: 22px; margin: 0 -3px; border-radius: 50%; background: #8d6e63; color: #fff; font-size: 12px; line-height: 22px; text-align: center; }
.upd { width: 93px; height: 29px; margin-left: 10px; border: 1px solid #d93025; border-radius: 15px; background: #fceeed; color: #d93025; display: flex; align-items: center; justify-content: space-between; padding: 0 11px 0 12px; font-size: 14.500px; }
.marks { height: 34px; flex: none; display: flex; align-items: center; padding-left: 15px; border-bottom: 1px solid #dadce0; padding-bottom: 3px; }
.mk { display: flex; align-items: center; height: 20px; flex: none; }
.lab { margin-left: 9px; overflow: visible; }
.lab text { font-family: "Noto Sans", sans-serif; font-size: 14px; fill: #45494d; }
.lab.dk text { fill: #202124; }
.right { margin-left: auto; }
.sep { border-left: 1px solid #c8cacd; height: 16px; padding-left: 11px; }
.sep.rl { margin: 0 13px 0 10px; }
.page { flex: 1; display: flex; align-items: flex-start; background: #dcdcdc; min-height: 0; }
.left { width: 741px; height: 949px; flex: none; display: flex; flex-direction: column; justify-content: space-between; }
.form { padding: 25px 0 0 37px; font-family: "Liberation Serif", serif; color: #000; }
h1 { margin: 0; font-size: 37.330px; line-height: 43px; font-weight: 700; white-space: nowrap; }
h3 { margin: 0; font-size: 21.330px; line-height: 24px; font-weight: 700; white-space: nowrap; }
.s1 { margin-top: 25px; }
.rows { margin: 27px 0 0 37px; display: flex; flex-direction: column; gap: 32px; }
.row { display: flex; }
.fld { width: 259px; display: flex; flex-direction: column; }
label { font-size: 16px; line-height: 18px; font-weight: 700; white-space: nowrap; }
.sel, .inp { background: #fff; border: 1px solid #767676; border-radius: 1.500px; font-family: "Liberation Sans", sans-serif; font-size: 13.333px; display: flex; align-items: center; white-space: nowrap; }
.sel { height: 19px; padding: 0 3px 0 4px; justify-content: space-between; }
.inp { height: 21px; padding: 0 3px; }
.s2 { margin-top: 36px; }
.btns { display: flex; margin: 19px 0 0 37px; }
button { border: 1px solid #cfd3d6; padding: 0; color: #fff; font-size: 16px; height: 32px; }
.load { width: 105px; background: #4a5f83; font-family: "Liberation Serif", serif; }
.rem { width: 110px; margin-left: 192px; background: #c20a19; font-family: "Liberation Sans", sans-serif; }
.s3 { margin-top: 24px; }
.sub { margin: 19px 0 0 111px; width: 84px; height: 36px; background: #000; font: 18.300px "Liberation Sans", sans-serif; display: block; }
.scroll { height: 15px; background: #f1f1f1; display: flex; align-items: center; }
.thumb { width: 593px; height: 11px; background: #c1c1c1; }
.ra { margin-left: auto; }
</style>
